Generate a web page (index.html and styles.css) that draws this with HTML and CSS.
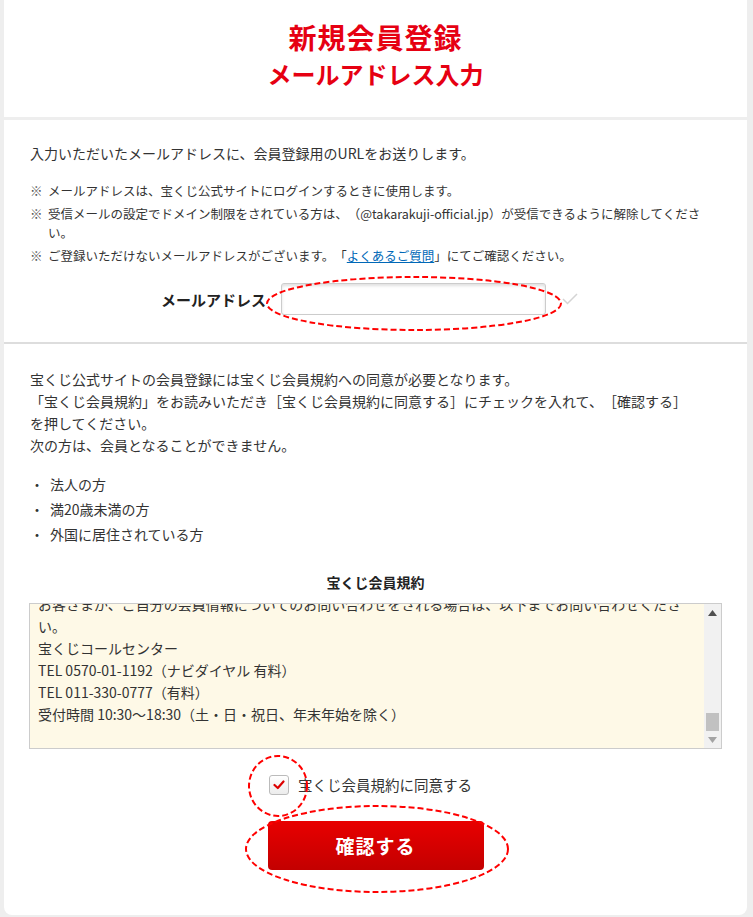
FILE: index.html
```html
<!DOCTYPE html>
<html lang="ja">
<head>
  <meta charset="UTF-8">
  <meta name="viewport" content="width=device-width, initial-scale=1.0">
  <title>新規会員登録 | メールアドレス入力</title>
  <link rel="stylesheet" href="styles.css">
</head>
<body>

  <div class="page">
    <header class="head">
      <h1 class="head-title">新規会員登録</h1>
      <p class="head-sub">メールアドレス入力</p>
    </header>

    <main class="card">
      <section class="mail-section">
        <p class="lead">入力いただいたメールアドレスに、会員登録用のURLをお送りします。</p>
        <ul class="notes">
          <li>メールアドレスは、宝くじ公式サイトにログインするときに使用します。</li>
          <li>受信メールの設定でドメイン制限をされている方は、（@takarakuji-official.jp）が受信できるように解除してください。</li>
          <li>ご登録いただけないメールアドレスがございます。「<a href="#">よくあるご質問</a>」にてご確認ください。</li>
        </ul>

        <div class="mail-row">
          <label class="mail-label" for="mail">メールアドレス</label>
          <div class="mail-field">
            <input type="email" id="mail" class="mail-input">
            <svg class="mark mark-mail" width="296" height="55"><ellipse cx="148" cy="27.5" rx="147" ry="26.5"/></svg>
          </div>
          <svg class="mail-ok" width="16" height="12" viewBox="0 0 16 12"><polyline points="1,6 5.5,10.5 15,1"/></svg>
        </div>
      </section>

      <section class="terms-section">
        <p class="terms-text">宝くじ公式サイトの会員登録には宝くじ会員規約への同意が必要となります。<br>「宝くじ会員規約」をお読みいただき［宝くじ会員規約に同意する］にチェックを入れて、［確認する］を押してください。<br>次の方は、会員となることができません。</p>
        <ul class="deny-list">
          <li>法人の方</li>
          <li>満20歳未満の方</li>
          <li>外国に居住されている方</li>
        </ul>

        <h2 class="terms-title">宝くじ会員規約</h2>
        <div class="terms-box">
          <div class="terms-view">
            <div class="terms-body">
              <p>お客さまが、ご自分の会員情報についてのお問い合わせをされる場合は、以下までお問い合わせください。</p>
              <p>宝くじコールセンター</p>
              <p>TEL 0570-01-1192（ナビダイヤル 有料）</p>
              <p>TEL 011-330-0777（有料）</p>
              <p>受付時間 10:30～18:30（土・日・祝日、年末年始を除く）</p>
            </div>
          </div>
          <div class="scrollbar">
            <div class="sb-btn"><svg width="9" height="6" viewBox="0 0 9 6"><polygon points="4.5,0 9,6 0,6" fill="#505050"/></svg></div>
            <div class="sb-track"><div class="sb-thumb"></div></div>
            <div class="sb-btn"><svg width="9" height="6" viewBox="0 0 9 6"><polygon points="0,0 9,0 4.5,6" fill="#a3a3a3"/></svg></div>
          </div>
        </div>

        <div class="agree-row">
          <label class="agree">
            <span class="agree-box">
              <svg class="agree-check" width="12" height="10" viewBox="0 0 12 10"><polyline points="1.5,5 4.8,8 10.5,1.5"/></svg>
              <svg class="mark mark-agree" width="60" height="62"><ellipse cx="30" cy="31" rx="29" ry="30"/></svg>
            </span>
            宝くじ会員規約に同意する
          </label>
        </div>

        <div class="submit-row">
          <button class="submit" type="button">確認する
            <svg class="mark mark-submit" width="264" height="88"><ellipse cx="132" cy="44" rx="131" ry="43"/></svg>
          </button>
        </div>
      </section>
    </main>
  </div>

</body>
</html>
```

FILE: styles.css
```css
*{
  margin: 0;
  padding: 0;
  box-sizing: border-box;
}

body{
  font-family: "Noto Sans CJK JP", "Noto Sans", sans-serif;
  background-color: #eeeeee;
  color: #333;
  font-size: 14px;
  text-spacing-trim: space-all;
}

.page{
  margin: 0 6px 0 4px;
}

/* header */
.head{
  background-color: #fff;
  height: 117px;
  text-align: center;
  padding-top: 18px;
  color: #e60012;
}

.head-title{
  font-size: 28px;
  line-height: 39px;
  font-weight: 700;
  letter-spacing: 1px;
}

.head-sub{
  font-size: 24px;
  line-height: 34px;
  font-weight: 700;
}

.card{
  background-color: #fff;
  margin-top: 3px;
  border-radius: 0 0 8px 8px;
}

/* mail address */
.mail-section{
  padding: 22px 27px 27px 26px;
  border-bottom: 2px solid #dddddd;
}

.lead{
  line-height: 22px;
}

.notes{
  list-style: none;
  margin-top: 17px;
  font-size: 12.5px;
  line-height: 19px;
}

.notes li{
  padding-left: 18px;
  margin-top: 4px;
}

.notes li:first-child{
  margin-top: 0;
}

.notes li::before{
  content: "※";
  display: inline-block;
  width: 18px;
  margin-left: -18px;
  color: #555;
}

.notes a{
  color: #0068b7;
}

.mail-row{
  display: flex;
  align-items: center;
  justify-content: center;
  margin-top: 18px;
  padding-right: 11px;
}

.mail-label{
  font-size: 15px;
  font-weight: 700;
  color: #222;
  margin-right: 15px;
}

.mail-field{
  position: relative;
}

.mail-input{
  display: block;
  width: 265px;
  height: 32px;
  border: 1px solid #cccccc;
  border-radius: 3px;
  box-shadow: inset 0 2px 3px rgba(0, 0, 0, 0.12);
  font: inherit;
  padding: 0 8px;
  outline: none;
}

.mail-ok{
  margin-left: 16px;
  fill: none;
  stroke: #d4d4d4;
  stroke-width: 1.5;
}

/* annotation rings */
.mark{
  position: absolute;
  fill: none;
  stroke: #ff0000;
  stroke-width: 2;
  stroke-dasharray: 6 3;
  pointer-events: none;
}

.mark-mail{
  left: -15px;
  top: -7px;
}

.mark-agree{
  left: -22px;
  top: -21px;
}

.mark-submit{
  left: -23px;
  top: -16px;
}

/* terms */
.terms-section{
  padding: 24px 25px 45px 25px;
}

.terms-text{
  line-height: 22px;
  max-width: 665px;
  padding-left: 1px;
}

.deny-list{
  list-style: none;
  margin-top: 16px;
  line-height: 25px;
  padding-left: 1px;
}

.deny-list li::before{
  content: "・";
  display: inline-block;
  width: 20px;
}

.terms-title{
  font-size: 14px;
  line-height: 20px;
  font-weight: 700;
  text-align: center;
  margin-top: 25px;
  color: #222;
}

.terms-box{
  display: flex;
  height: 146px;
  margin-top: 11px;
  border: 1px solid #cccccc;
  background-color: #fef9e7;
}

.terms-view{
  flex: 1;
  display: flex;
  flex-direction: column;
  justify-content: flex-end;
  overflow: hidden;
  padding: 0 4px 23px 8px;
}

.terms-body{
  line-height: 22px;
}

.scrollbar{
  width: 17px;
  display: flex;
  flex-direction: column;
  background-color: #f1f1f1;
}

.sb-btn{
  height: 17px;
  display: grid;
  place-content: center;
}

.sb-track{
  flex: 1;
  display: flex;
  flex-direction: column;
  justify-content: flex-end;
  padding: 0 2px;
}

.sb-thumb{
  height: 18px;
  background-color: #c1c1c1;
}

/* agree + submit */
.agree-row{
  display: flex;
  justify-content: center;
  margin-top: 26px;
  padding-right: 10px;
}

.agree{
  display: flex;
  align-items: center;
  font-size: 14.5px;
  line-height: 20px;
  color: #333;
}

.agree-box{
  position: relative;
  width: 20px;
  height: 20px;
  margin-right: 9px;
  border: 1px solid #bbbbbb;
  border-radius: 3px;
  background: linear-gradient(#ffffff, #ececec);
  display: grid;
  place-content: center;
}

.agree-check{
  fill: none;
  stroke: #dd0000;
  stroke-width: 2.2;
  stroke-linecap: round;
  stroke-linejoin: round;
}

.submit-row{
  display: flex;
  justify-content: center;
  margin-top: 26px;
}

.submit{
  position: relative;
  width: 216px;
  height: 49px;
  border: none;
  border-radius: 4px;
  background: linear-gradient(#e80000, #c30000);
  color: #fff;
  font: inherit;
  font-size: 19px;
  font-weight: 700;
  letter-spacing: 1px;
  cursor: pointer;
}
```
